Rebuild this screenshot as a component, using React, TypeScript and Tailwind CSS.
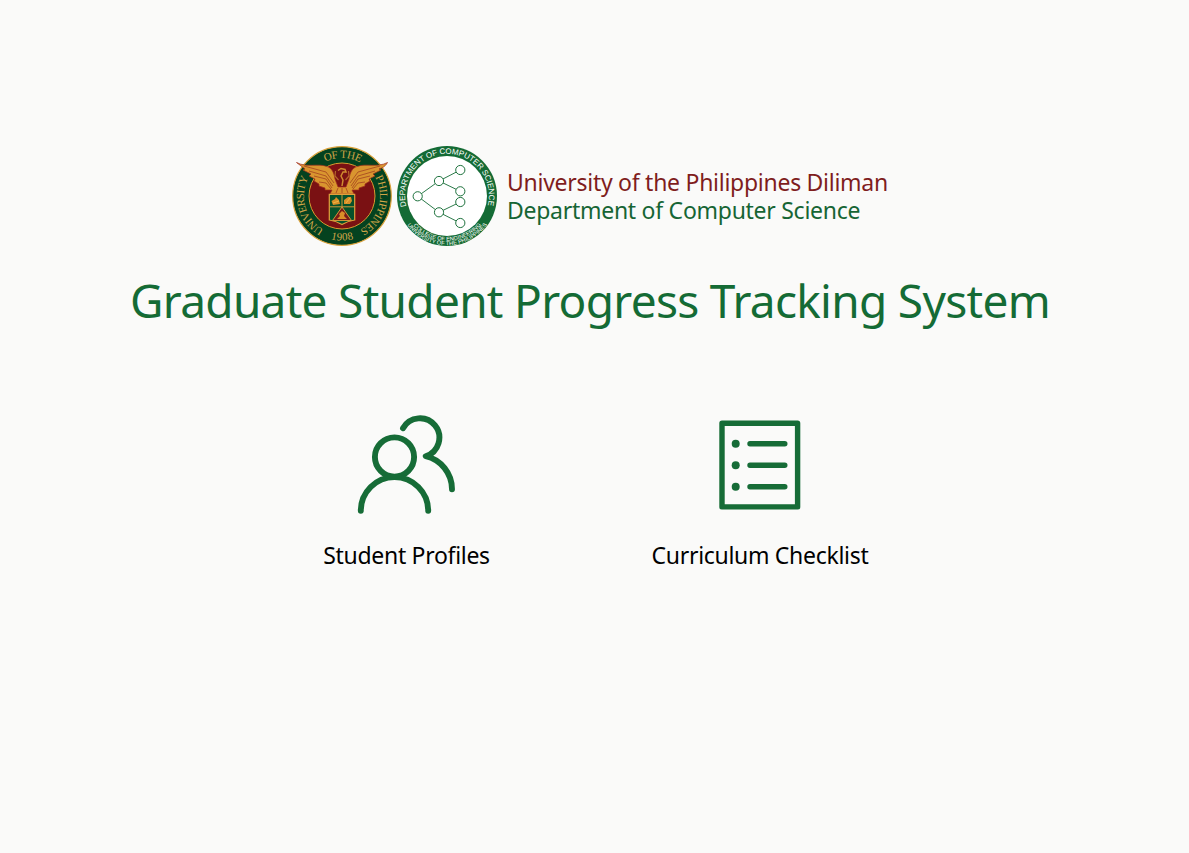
import type { ReactNode } from "react";

function UniversitySeal() {
  return (
    <svg viewBox="0 0 100 100" className="size-[100px] shrink-0" aria-label="University seal">
      <defs>
        <path id="uni-top" d="M11.9 50A38.1 38.1 0 0 1 88.1 50" />
        <path id="uni-left" d="M50 88.1A38.1 38.1 0 0 1 50 11.9" />
        <path id="uni-right" d="M50 11.9A38.1 38.1 0 0 1 50 88.1" />
        <path id="uni-bottom" d="M5.5 50A44.5 44.5 0 0 0 94.5 50" />
      </defs>
      <circle cx="50" cy="50" r="49.3" fill="#04421f" stroke="#d9a13a" strokeWidth="1.2" />
      <circle cx="50" cy="50" r="33" fill="#7a1113" stroke="#d99a30" strokeWidth="1" />
      <g fill="#d0a548" fontFamily="Liberation Serif, serif" fontSize="11">
        <text><textPath href="#uni-top" startOffset="42.5" textLength="36">OF THE</textPath></text>
        <text><textPath href="#uni-left" startOffset="19" textLength="60">UNIVERSITY</textPath></text>
        <text><textPath href="#uni-right" startOffset="40" textLength="61">PHILIPPINES</textPath></text>
        <text><textPath href="#uni-bottom" startOffset="58.5" textLength="23">1908</textPath></text>
      </g>
      <path
        d="M4.5 16.5C15 22 26 17 35 20.5C40 22 42 27 43 33L46 41H54L57 33C58 27 60 22 65 20.5C74 17 85 22 95.5 16.5C93 21 90 22 87 23L89 24L81 28L83 30L77 33L78 35L73 38L73 40L67 42L67 44L60 44L62 48L38 48L40 44L33 44L33 42L27 40L27 38L22 35L23 33L17 30L19 28L11 24L13 23Z"
        fill="#d9952f"
        stroke="#a12d1c"
        strokeWidth=".7"
      />
      <path
        d="M12 20L34 26L42 37M17 25L34 30L41 40M22 30L34 33L40 42M27 36L34 37L39 43M88 20L66 26L58 37M83 25L66 30L59 40M78 30L66 33L60 42M73 36L66 37L61 43M46 42L44 47M54 42L56 47M50 42V47"
        fill="none"
        stroke="#a3421f"
        strokeWidth=".8"
      />
      <path d="M43.5 25L43 30L46.5 34M56.5 25L57 30L53.5 34" fill="none" stroke="#b5652a" strokeWidth="1.2" />
      <path d="M46 24.5L49 22.5L53 23.5L54 26L51 26L49 30L51 34L50 40" fill="none" stroke="#d08c30" strokeWidth="1.5" />
      <path d="M37.3 48.3H62.7V74Q56 75 50 78.5Q44 75 37.3 74Z" fill="#07512b" stroke="#e0a13c" strokeWidth="1.2" />
      <path d="M50 61L40.5 74.5H59.5Z" fill="#7a1b18" stroke="#e0a13c" strokeWidth=".9" />
      <path d="M38 60.8H62M50 49V60.8" fill="none" stroke="#e0a13c" strokeWidth=".9" />
      <path d="M39.5 55L43 53L44 51L47 54L48 58L41 59ZM52 54L56 51L59 51L60 55L58 58L52 58ZM47 68L50 65L53 67L52 70L55 73H45L48 70Z" fill="#d98f28" />
      <path d="M41 57L47 55M54 57L58 52" stroke="#f0c24c" strokeWidth=".8" />
    </svg>
  );
}

const treeNodes: [number, number][] = [
  [20.7, 50.3],
  [42, 35],
  [42, 66.3],
  [63.3, 24],
  [63.3, 45.3],
  [63.3, 56],
  [63.3, 77],
];

function DepartmentSeal() {
  return (
    <svg viewBox="0 0 100 100" className="size-[100px] shrink-0" aria-label="Department seal">
      <defs>
        <path id="dept-top" d="M9.1 59.4A42 42 0 1 1 90.9 59.4" />
        <path id="dept-low-in" d="M5.2 50A44.8 44.8 0 0 0 94.8 50" />
        <path id="dept-low-out" d="M.8 50A49.2 49.2 0 0 0 99.2 50" />
      </defs>
      <circle cx="50" cy="50" r="50" fill="#146b35" />
      <circle cx="50" cy="50" r="40" fill="#fff" />
      <g fill="#fff" fontFamily="Liberation Sans, sans-serif">
        <text fontSize="8"><textPath href="#dept-top" startOffset="-1" textLength="152">DEPARTMENT OF COMPUTER SCIENCE</textPath></text>
        <text fontSize="5.6"><textPath href="#dept-low-in" startOffset="32" textLength="77">COLLEGE OF ENGINEERING</textPath></text>
        <text fontSize="5.6"><textPath href="#dept-low-out" startOffset="31" textLength="93">UNIVERSITY OF THE PHILIPPINES</textPath></text>
      </g>
      <path
        d="M20.7 50.3L42 35L63.3 24M42 35L63.3 45.3M20.7 50.3L42 66.3L63.3 56M42 66.3L63.3 77"
        fill="none"
        stroke="#146b35"
        strokeWidth=".9"
      />
      {treeNodes.map(([x, y]) => (
        <circle key={`${x}-${y}`} cx={x} cy={y} r="4.6" fill="#fff" stroke="#146b35" strokeWidth=".95" />
      ))}
    </svg>
  );
}

function ProfilesIcon() {
  return (
    <svg viewBox="0 0 100 100" className="size-[100px]" fill="none" stroke="#166c37" strokeWidth="5.9" strokeLinecap="round" strokeLinejoin="round">
      <circle cx="37.5" cy="42" r="19.6" />
      <path d="M3.8 95.8A33.7 33.7 0 0 1 71.2 95.8" />
      <path d="M46 13.2A19.4 19.4 0 1 1 68.7 41.2A34 34 0 0 1 95 74.3" />
    </svg>
  );
}

function ChecklistIcon() {
  return (
    <svg viewBox="0 0 100 100" className="size-[100px]" fill="none" stroke="#166c37" strokeWidth="5.4" strokeLinecap="round" strokeLinejoin="round">
      <rect x="12" y="8.3" width="75.6" height="83.6" />
      <path d="M40 28.8H74.8M40 50.3H74.8M40 71.7H74.8" />
      <g fill="#166c37" stroke="none">
        <circle cx="25.7" cy="28.8" r="4" />
        <circle cx="25.7" cy="50.3" r="4" />
        <circle cx="25.7" cy="71.7" r="4" />
      </g>
    </svg>
  );
}

function MenuLink({ icon, children }: { icon: ReactNode; children: ReactNode }) {
  return (
    <a href="#" className="flex flex-col items-center gap-6 text-[23px] leading-8 tracking-[-0.3px] text-black">
      {icon}
      <span className="whitespace-nowrap">{children}</span>
    </a>
  );
}

export default function App() {
  return (
    <main className="flex h-screen flex-col items-center overflow-hidden bg-[#fafaf9] pr-[9px] pt-[146px] font-['Noto_Sans',sans-serif]">
      <header className="flex w-[596px] items-center">
        <UniversitySeal />
        <div className="w-[5px] shrink-0" />
        <DepartmentSeal />
        <div className="ml-[10px] whitespace-nowrap text-[23px] leading-7 tracking-[-0.27px]">
          <p className="text-[#7f1d1d]">University of the Philippines Diliman</p>
          <p className="text-[#166534]">Department of Computer Science</p>
        </div>
      </header>
      <h1 className="mt-[30px] whitespace-nowrap text-[46px] leading-[48px] tracking-[-0.7px] text-[#146b35]">
        Graduate Student Progress Tracking System
      </h1>
      <nav className="ml-[12px] mt-[91px] grid grid-cols-[166px_217px] gap-[162px]">
        <MenuLink icon={<ProfilesIcon />}>Student Profiles</MenuLink>
        <MenuLink icon={<ChecklistIcon />}>Curriculum Checklist</MenuLink>
      </nav>
    </main>
  );
}
